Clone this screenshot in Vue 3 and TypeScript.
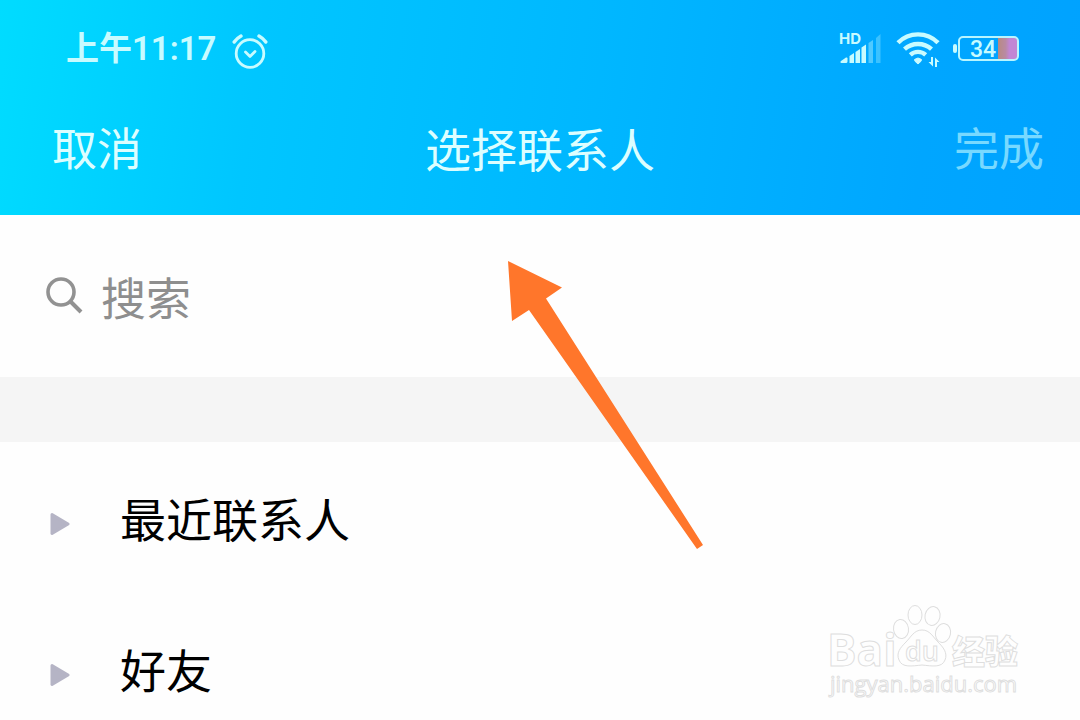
<script setup lang="ts">
import { ref } from 'vue'

interface Group {
  id: string
  name: string
}

const query = ref<string>('')
const openGroup = ref<string | null>(null)
const groups: Group[] = [
  { id: 'recent', name: '最近联系人' },
  { id: 'friends', name: '好友' },
]

function toggle(id: string): void {
  openGroup.value = openGroup.value === id ? null : id
}
</script>

<template>
  <main class="screen">
    <header class="top">
      <div class="status">
        <div class="status-left">
          <span class="time">上午11:17</span>
          <svg class="alarm" viewBox="0 0 36 36" width="36" height="36" aria-hidden="true">
            <g fill="none" stroke="#c8fbff" stroke-linecap="round" stroke-linejoin="round">
              <circle cx="18" cy="20.500" r="13.800" stroke-width="2.800" />
              <path d="M13.500 19l4.500 4.500 5-5" stroke-width="2.800" />
              <path d="M2.200 9Q4.500 5.500 9 3M27 3Q31.500 5.500 33.800 9" stroke-width="3.400" />
            </g>
          </svg>
        </div>
        <div class="status-right">
          <svg class="signal" viewBox="0 0 44 46" width="44" height="46" aria-hidden="true">
            <text x="1" y="18" class="hd">HD</text>
            <g fill="#c8fbff">
              <path d="M3 35L8 31.500Q9.500 31 9.500 32.500V35.500Q9.500 37 8 37H3.500Q1.500 36.500 3 35z" />
              <path d="M11.500 30l4.500-3v10h-4.500z" />
              <path d="M17.500 26l4.500-3v14h-4.500z" />
              <path d="M23.500 21.500l4.500-3V37h-4.500z" />
              <path d="M30.500 17l4.500-3v23h-4.500z" opacity=".4" />
              <path d="M38 12l4.500-4v29H38z" opacity=".3" />
            </g>
          </svg>
          <svg class="wifi" viewBox="0 0 46 38" width="46" height="38" aria-hidden="true">
            <g fill="none" stroke="#c8fbff" stroke-width="4.400">
              <path d="M4 12.800A28 28 0 0 1 44 12.800" />
              <path d="M10.500 19.200A20 20 0 0 1 37.500 19.200" />
              <path d="M16.300 24.800A11.500 11.500 0 0 1 31.700 24.800" />
            </g>
            <path d="M20.500 29.500Q24 26.500 27.500 29.500Q28 31 24 34Q20 31 20.500 29.500z" fill="#c8fbff" stroke="#c8fbff" stroke-linejoin="round" />
            <path d="M37 27h2v9.500L34.500 32H37zM41 37h2v-5h2.500L41 27.500z" fill="#c8fbff" />
          </svg>
          <svg class="battery" viewBox="0 0 68 30" width="68" height="30" aria-hidden="true">
            <defs>
              <linearGradient id="charge">
                <stop offset="0" stop-color="#b88a82" />
                <stop offset="0.400" stop-color="#b98aa4" />
                <stop offset="0.600" stop-color="#c286d4" />
              </linearGradient>
            </defs>
            <rect x="1" y="10" width="4" height="9" rx="2" fill="#c8fbff" />
            <rect x="46" y="4" width="19" height="21" fill="url(#charge)" />
            <rect x="7" y="3" width="59" height="23" rx="4" fill="none" stroke="#b8f5ff" stroke-width="2" />
            <text x="18" y="23" class="level">34</text>
          </svg>
        </div>
      </div>
      <nav class="bar">
        <button type="button" class="action cancel">取消</button>
        <h1 class="title">选择联系人</h1>
        <button type="button" class="action done" disabled>完成</button>
      </nav>
    </header>

    <label class="search">
      <svg viewBox="0 0 38 38" width="38" height="38" aria-hidden="true">
        <g fill="none" stroke="#929292" stroke-width="3.600">
          <circle cx="15" cy="15" r="13" />
          <path d="M24 24L35 35" stroke-width="4" />
        </g>
      </svg>
      <input v-model="query" type="text" placeholder="搜索" aria-label="搜索" />
    </label>

    <div class="divider"></div>

    <ul class="groups">
      <li v-for="group in groups" :key="group.id">
        <button type="button" class="group" :aria-expanded="openGroup === group.id" @click="toggle(group.id)">
          <svg class="caret" viewBox="0 0 20 24" width="20" height="24" aria-hidden="true">
            <path d="M2 2.500L18 12 2 21.500z" fill="#b5b4c5" stroke="#b5b4c5" stroke-width="3" stroke-linejoin="round" />
          </svg>
          <span class="name">{{ group.name }}</span>
        </button>
      </li>
    </ul>

    <svg class="arrow" viewBox="0 0 196 288" width="196" height="288" aria-hidden="true">
      <path d="M0 0L54 26.500 38 37.500 195 284 189 288 21 49 4 60z" class="arrow-shape" />
    </svg>

    <svg class="watermark" viewBox="0 0 200 100" width="200" height="100" aria-hidden="true">
      <g class="mark">
        <text x="3" y="61" class="bai">Bai</text>
        <ellipse cx="77" cy="24" rx="7.500" ry="9.500" transform="rotate(-8 77 24)" />
        <ellipse cx="91" cy="10" rx="7" ry="9.500" />
        <ellipse cx="108.500" cy="11" rx="7.500" ry="9.500" transform="rotate(12 108.500 11)" />
        <ellipse cx="119" cy="28" rx="7.500" ry="9.500" transform="rotate(12 119 28)" />
        <path d="M98 25C90 25 87 32 82 37C76 43 72 48 75 55C78 63 88 61 98 60C108 61 118 63 121 55C124 48 119 42 114 37C109 32 106 25 98 25z" />
        <text x="81" y="56" class="du">du</text>
        <text x="128" y="59" class="exp">经验</text>
        <text x="6" y="87" class="site">jingyan.baidu.com</text>
      </g>
    </svg>
  </main>
</template>

<style>
body {
  margin: 0;
  background: #fefefe;
}
</style>

<style scoped>
.screen {
  position: relative;
  height: 100vh;
  overflow: hidden;
  background: #fefefe;
  color: #000;
  font-family: "Noto Sans CJK SC", sans-serif;
}

.top {
  box-sizing: border-box;
  padding-top: 24px;
  height: 215px;
  background: linear-gradient(98deg, #00dcff 0%, #00c6ff 24%, #00b7ff 55%, #00a6ff 85%, #00a2ff 100%);
  color: #dcfeff;
}

.status {
  display: flex;
  justify-content: space-between;
  align-items: center;
  height: 50px;
  padding: 0 60px 0 66px;
}

.status-left,
.status-right {
  display: flex;
  align-items: center;
}

.status-left {
  gap: 16px;
}

.status-right {
  gap: 12px;
}

.time {
  font-family: Roboto, "Noto Sans CJK SC", sans-serif;
  font-size: 33px;
  line-height: 48px;
  font-weight: 600;
  color: #c8fbff;
}

.alarm {
  margin-top: 4px;
}

.hd {
  font: 700 15px Inter, sans-serif;
  fill: #c8fbff;
}

.level {
  font: 500 23px Roboto, sans-serif;
  fill: #c8fbff;
}

.bar {
  display: grid;
  grid-template-columns: 1fr auto 1fr;
  align-items: center;
  height: 146px;
  padding: 0 36px;
}

.action {
  padding: 0;
  border: 0;
  background: none;
  color: inherit;
  font: inherit;
  font-size: 45px;
  line-height: 64px;
}

.cancel {
  justify-self: start;
  margin-left: 16px;
}

.done {
  justify-self: end;
  color: #78d9ff;
}

.title {
  margin: 0;
  font-size: 46px;
  font-weight: 400;
  line-height: 64px;
}

.search {
  display: flex;
  align-items: center;
  gap: 17px;
  height: 162px;
  padding: 0 46px;
}

.search svg {
  flex: none;
}

.search input {
  flex: 1;
  min-width: 0;
  height: 68px;
  padding: 0;
  border: 0;
  outline: 0;
  background: none;
  color: #222;
  font: inherit;
  font-size: 45px;
}

.search input::placeholder {
  color: #8e8e8e;
  opacity: 1;
}

.divider {
  height: 65px;
  background: #f5f5f5;
}

.groups {
  margin: 0;
  padding: 6px 0 0;
  list-style: none;
}

.group {
  display: flex;
  align-items: center;
  gap: 50px;
  width: 100%;
  height: 151px;
  padding: 0 50px;
  border: 0;
  background: none;
  color: #000;
  font: inherit;
  font-size: 46px;
  line-height: 64px;
  text-align: left;
}

.name {
  padding-bottom: 14px;
}

.arrow {
  position: absolute;
  left: 508px;
  top: 261px;
}

.arrow-shape {
  fill: #ff762b;
}

.watermark {
  position: absolute;
  right: 56px;
  bottom: 15px;
  overflow: visible;
}

.mark {
  fill: #fefefe;
  stroke: #dedede;
  stroke-width: 1;
}

.bai {
  font: 700 44px "Open Sans", sans-serif;
}

.du {
  font: 600 27px "Open Sans", sans-serif;
}

.exp {
  font: 900 33px "Noto Sans CJK SC", sans-serif;
}

.site {
  font: 400 22px "Open Sans", sans-serif;
}
</style>
